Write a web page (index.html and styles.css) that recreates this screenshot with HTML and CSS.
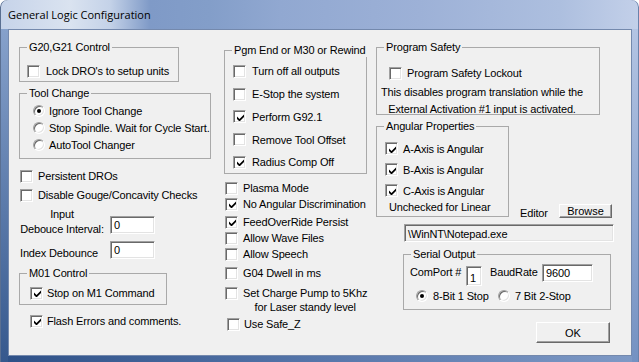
FILE: index.html
```html
<!DOCTYPE html>
<html lang="en">
<head>
  <meta charset="UTF-8">
  <title>General Logic Configuration</title>
  <link rel="stylesheet" href="styles.css">
</head>
<body>

<div class="window">
  <div class="titlebar">General Logic Configuration</div>

  <div class="client">

    <!-- left column -->
    <div class="col col-left">
      <div class="group group-units">
        <div class="group-title">G20,G21 Control</div>
        <label class="check lock"><span class="box"></span>Lock DRO's to setup units</label>
      </div>

      <div class="group group-tool">
        <div class="group-title">Tool Change</div>
        <div class="radio-list">
          <label class="option"><span class="radio on"></span>Ignore Tool Change</label>
          <label class="option"><span class="radio"></span>Stop Spindle. Wait for Cycle Start.</label>
          <label class="option"><span class="radio"></span>AutoTool Changer</label>
        </div>
      </div>

      <label class="check persist"><span class="box"></span>Persistent DROs</label>
      <label class="check gouge"><span class="box"></span>Disable Gouge/Concavity Checks</label>

      <div class="field-row debounce">
        <div class="field-label two-line">Input<br>Debouce Interval:</div>
        <div class="field num-field">0</div>
      </div>
      <div class="field-row index">
        <div class="field-label">Index Debounce</div>
        <div class="field num-field">0</div>
      </div>

      <div class="group group-m01">
        <div class="group-title">M01 Control</div>
        <label class="check m01"><span class="box"><svg viewBox="0 0 7 7"><path d="M0 2.5L2.5 5L7 0.5V3L2.5 7.5L0 5Z"/></svg></span>Stop on M1 Command</label>
      </div>

      <label class="check flash"><span class="box"><svg viewBox="0 0 7 7"><path d="M0 2.5L2.5 5L7 0.5V3L2.5 7.5L0 5Z"/></svg></span>Flash Errors and comments.</label>
    </div>

    <!-- middle column -->
    <div class="col col-mid">
      <div class="group group-pgm">
        <div class="group-title">Pgm End or M30 or Rewind</div>
        <div class="pgm-list">
          <label class="check pgm"><span class="box"></span>Turn off all outputs</label>
          <label class="check pgm"><span class="box"></span>E-Stop the system</label>
          <label class="check pgm"><span class="box"><svg viewBox="0 0 7 7"><path d="M0 2.5L2.5 5L7 0.5V3L2.5 7.5L0 5Z"/></svg></span>Perform G92.1</label>
          <label class="check pgm"><span class="box"></span>Remove Tool Offset</label>
          <label class="check pgm"><span class="box"><svg viewBox="0 0 7 7"><path d="M0 2.5L2.5 5L7 0.5V3L2.5 7.5L0 5Z"/></svg></span>Radius Comp Off</label>
        </div>
      </div>

      <div class="opts">
        <label class="check opt"><span class="box"></span>Plasma Mode</label>
        <label class="check opt"><span class="box"><svg viewBox="0 0 7 7"><path d="M0 2.5L2.5 5L7 0.5V3L2.5 7.5L0 5Z"/></svg></span>No Angular Discrimination</label>
        <label class="check opt mt2"><span class="box"><svg viewBox="0 0 7 7"><path d="M0 2.5L2.5 5L7 0.5V3L2.5 7.5L0 5Z"/></svg></span>FeedOverRide Persist</label>
        <label class="check opt"><span class="box"></span>Allow Wave Files</label>
        <label class="check opt"><span class="box"></span>Allow Speech</label>
        <label class="check opt mt3"><span class="box"></span>G04 Dwell in ms</label>
        <label class="check opt charge"><span class="box"></span><span class="charge-text">Set Charge Pump to 5Khz<br>for Laser standy level</span></label>
        <label class="check opt safez"><span class="box"></span>Use Safe_Z</label>
      </div>
    </div>

    <!-- right column -->
    <div class="col col-right">
      <div class="group group-safety">
        <div class="group-title">Program Safety</div>
        <label class="check lockout"><span class="box"></span>Program Safety Lockout</label>
        <div class="note">This disables program translation while the<br>External Activation #1 input is activated.</div>
      </div>

      <div class="angular-row">
        <div class="group group-angular">
          <div class="group-title">Angular Properties</div>
          <div class="axis-list">
            <label class="check axis"><span class="box"><svg viewBox="0 0 7 7"><path d="M0 2.5L2.5 5L7 0.5V3L2.5 7.5L0 5Z"/></svg></span>A-Axis is Angular</label>
            <label class="check axis"><span class="box"><svg viewBox="0 0 7 7"><path d="M0 2.5L2.5 5L7 0.5V3L2.5 7.5L0 5Z"/></svg></span>B-Axis is Angular</label>
            <label class="check axis"><span class="box"><svg viewBox="0 0 7 7"><path d="M0 2.5L2.5 5L7 0.5V3L2.5 7.5L0 5Z"/></svg></span>C-Axis is Angular</label>
          </div>
          <div class="unchecked">Unchecked for Linear</div>
        </div>

        <div class="editor">
          <span class="editor-label">Editor</span>
          <button class="btn browse">Browse</button>
        </div>
      </div>

      <div class="field path">\WinNT\Notepad.exe</div>

      <div class="group group-serial">
        <div class="group-title">Serial Output</div>
        <div class="serial-row">
          <span class="port-label">ComPort #</span>
          <div class="field port-field">1</div>
          <span class="baud-label">BaudRate</span>
          <div class="field baud-field">9600</div>
        </div>
        <div class="radio-row">
          <label class="option"><span class="radio on"></span><span class="bits">8-Bit 1 Stop</span></label>
          <label class="option"><span class="radio"></span>7 Bit 2-Stop</label>
        </div>
      </div>

      <button class="btn ok">OK</button>
    </div>

  </div>
</div>

</body>
</html>
```

FILE: styles.css
```css
body {
  margin: 0;
  background: #fff;
  font-family: "Liberation Sans", Arial, sans-serif;
  font-size: 11px;
  letter-spacing: -0.15px;
  color: #000;
  white-space: nowrap;
}

.window {
  width: 639px;
  height: 362px;
  box-sizing: border-box;
  padding: 0 7px 6px 8px;
  display: flex;
  flex-direction: column;
  border-radius: 7px 7px 0 0;
  background:
    linear-gradient(180deg, #86a1cb, #2f5288) 0 29px / 8px 100% no-repeat,
    linear-gradient(180deg, #b3c4e3, #6f8dbf) 100% 29px / 7px 100% no-repeat,
    linear-gradient(90deg, #2d5087, #5676aa 50%, #7f9ac6) 0 100% / 100% 6px no-repeat,
    linear-gradient(90deg, #c6d3e9 0, #dae3f0 70px, #c4d2e8 110px, #7f9ac7 150px, #839ec9 210px, #91a8d1 280px, #9db1d7 420px, #adbfdf 560px, #c3d0e9 639px);
  box-shadow: inset 1px 0 0 #5a6f91, inset -1px 0 0 #6a82aa;
}

.titlebar {
  height: 29px;
  box-sizing: border-box;
  padding-top: 7px;
  font-family: "Open Sans", sans-serif;
  font-size: 11px;
  letter-spacing: 0;
  line-height: 16px;
}

.client {
  flex: 1;
  display: flex;
  padding-left: 10px;
  background: #f0f0f0;
  border: 1px solid #7489ad;
}

.col {
  flex: none;
}

.col-left { width: 205px; }
.col-mid { width: 152px; }
.col-right { flex: 1; }

/* group boxes */
.group {
  box-sizing: border-box;
  border: 1px solid #a9a9a9;
}

.group-title {
  width: fit-content;
  margin: -7px 0 0 7px;
  padding: 0 2px;
  line-height: 13px;
  background: #f0f0f0;
}

/* checkboxes and radios */
.check {
  display: flex;
  align-items: center;
  height: 16px;
  gap: 5px;
}

.box {
  flex: none;
  width: 13px;
  height: 13px;
  box-sizing: border-box;
  display: flex;
  align-items: center;
  justify-content: center;
  background: #fff;
  border: 1px solid;
  border-color: #a0a0a0 #fff #fff #a0a0a0;
  box-shadow: inset 1px 1px 0 #696969, inset -1px -1px 0 #e3e3e3;
}

.box svg {
  width: 7px;
  height: 7px;
  margin: 1px 0 0 1px;
  fill: #000;
}

.option {
  display: flex;
  align-items: center;
  gap: 5px;
}

.radio {
  flex: none;
  width: 12px;
  height: 12px;
  box-sizing: border-box;
  display: flex;
  align-items: center;
  justify-content: center;
  border-radius: 50%;
  background: #fff;
  border: 1px solid;
  border-color: #a0a0a0 #fff #fff #a0a0a0;
  box-shadow: inset 1px 1px 0 #696969, inset -1px -1px 0 #e3e3e3;
}

.radio.on::after {
  content: "";
  width: 4px;
  height: 4px;
  border-radius: 50%;
  background: #000;
}

/* text fields and buttons */
.field {
  box-sizing: border-box;
  background: #fff;
  border: 1px solid;
  border-color: #a0a0a0 #fff #fff #a0a0a0;
  box-shadow: inset 1px 1px 0 #696969, inset -1px -1px 0 #e3e3e3;
  padding: 1px 3px 0;
  line-height: 14px;
}

.btn {
  box-sizing: border-box;
  padding: 0;
  font: inherit;
  background: #f0f0f0;
  border: 1px solid;
  border-color: #fff #696969 #696969 #fff;
  box-shadow: inset -1px -1px 0 #a0a0a0;
  color: #000;
}

/* left column */
.group-units {
  margin-top: 17px;
  width: 160px;
  height: 35px;
}

.lock {
  margin: 9px 0 0 7px;
  gap: 6px;
}

.group-tool {
  margin-top: 11px;
  width: 192px;
  height: 66px;
}

.radio-list {
  margin: 2px 0 0 13px;
}

.radio-list .option {
  height: 17px;
  gap: 4px;
}

.persist {
  margin: 9px 0 0 1px;
}

.gouge {
  margin: 3px 0 0 1px;
}

.field-row {
  display: flex;
  align-items: flex-start;
  margin-left: 1px;
}

.field-label {
  width: 90px;
  line-height: 15px;
}

.two-line {
  width: 84px;
  margin-right: 6px;
  text-align: center;
}

.debounce {
  margin-top: 4px;
}

.debounce .field {
  margin-top: 9px;
}

.index {
  margin-top: 4px;
}

.index .field-label {
  margin-top: 5px;
}

.num-field {
  width: 45px;
  height: 18px;
}

.group-m01 {
  margin-top: 12px;
  width: 148px;
  height: 32px;
}

.m01 {
  margin: 5px 0 0 10px;
  gap: 4px;
}

.flash {
  margin: 8px 0 0 11px;
  gap: 4px;
}

/* middle column */
.group-pgm {
  margin-top: 20px;
  width: 143px;
  height: 124px;
}

.pgm-list {
  margin-top: 3px;
}

.pgm {
  height: 22.75px;
  margin-left: 8px;
  gap: 6px;
}

.opts {
  margin-top: 6px;
}

.opt {
  margin-left: 1px;
}

.mt2 { margin-top: 2px; }
.mt3 { margin-top: 3px; }

.charge {
  height: auto;
  align-items: flex-start;
  margin-top: 5px;
}

.charge .box {
  margin-top: 0.5px;
}

.charge-text {
  line-height: 14px;
  text-align: center;
}

.safez {
  margin: 2px 0 0 3px;
  gap: 4px;
}

/* right column */
.group-safety {
  margin-top: 17px;
  width: 224px;
  height: 68px;
}

.lockout {
  margin: 11px 0 0 12px;
}

.note {
  width: 210px;
  margin-top: 3px;
  line-height: 17px;
  text-align: center;
}

.angular-row {
  display: flex;
  margin-top: 11px;
}

.group-angular {
  width: 133px;
  height: 91px;
}

.axis-list {
  margin-top: 5px;
}

.axis {
  height: 21px;
  margin-left: 8px;
}

.unchecked {
  margin-left: 12px;
  line-height: 12px;
}

.editor {
  align-self: flex-end;
  display: flex;
  align-items: flex-end;
  margin: 0 0 -1px 11px;
}

.editor-label {
  width: 39px;
  line-height: 13px;
  margin-bottom: -2px;
}

.browse {
  width: 53px;
  height: 14px;
  line-height: 12px;
}

.path {
  margin: 7px 0 0 28px;
  width: 210px;
  height: 18px;
  padding-top: 2px;
  background: #f0f0f0;
}

.group-serial {
  margin: 12px 0 0 27px;
  width: 208px;
  height: 56px;
}

.serial-row {
  display: flex;
  align-items: flex-start;
  margin: 3px 0 0 6px;
}

.port-label {
  width: 56px;
  margin-top: 1px;
  line-height: 15px;
}

.port-field {
  width: 16px;
  height: 20px;
  margin-top: 2px;
  padding: 4px 0 0 3px;
}

.baud-label {
  width: 52px;
  margin: 1px 0 0 8px;
  line-height: 15px;
}

.baud-field {
  width: 51px;
  height: 18px;
}

.radio-row {
  display: flex;
  height: 16px;
  align-items: center;
  margin: 2px 0 0 12px;
}

.bits {
  width: 65px;
}

.ok {
  margin: 12px 0 0 160px;
  width: 74px;
  height: 21px;
}
```
